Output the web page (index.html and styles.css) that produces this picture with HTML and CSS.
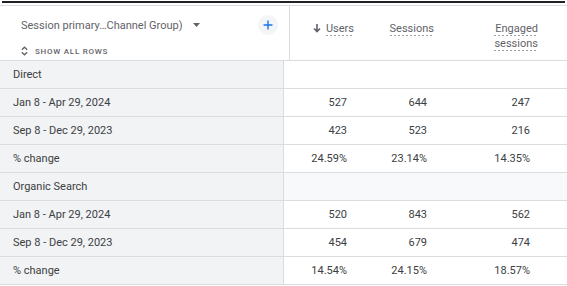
FILE: index.html
```html
<!DOCTYPE html>
<html>
<head>
<meta charset="utf-8">
<link rel="stylesheet" href="styles.css">
</head>
<body>
<div class="topbar"></div>
<div class="table">
  <div class="head">
    <div class="head-dim">
      <div class="dim-row">
        <span class="dim-name">Session primary…Channel Group)</span>
        <svg class="caret" width="7" height="4" viewBox="0 0 7 4"><path d="M0 0h7L3.5 4z" fill="#5f6368"/></svg>
        <span class="add"><svg width="10" height="10" viewBox="0 0 10 10"><path d="M5 0.5v9M0.5 5h9" stroke="#1a73e8" stroke-width="1.4"/></svg></span>
      </div>
      <div class="show-all">
        <svg width="7" height="10" viewBox="0 0 7 10"><path d="M0.8 3.8L3.5 1.2 6.2 3.8M0.8 6.2L3.5 8.8 6.2 6.2" fill="none" stroke="#5f6368" stroke-width="1.3"/></svg>
        <span>SHOW ALL ROWS</span>
      </div>
    </div>
    <div class="hcell c1"><svg class="arrow" width="8" height="9" viewBox="0 0 8 9"><path d="M4 0v7M1 4.5L4 7.5 7 4.5" fill="none" stroke="#5f6368" stroke-width="1.6"/></svg><span class="u">Users</span></div>
    <div class="hcell c2"><span class="u">Sessions</span></div>
    <div class="hcell c3"><span class="u">Engaged<br>sessions</span></div>
  </div>

  <div class="row group"><div class="lab">Direct</div><div class="vals"></div></div>
  <div class="row"><div class="lab">Jan 8 - Apr 29, 2024</div><div class="vals"><span class="v1">527</span><span class="v2">644</span><span class="v3">247</span></div></div>
  <div class="row"><div class="lab">Sep 8 - Dec 29, 2023</div><div class="vals"><span class="v1">423</span><span class="v2">523</span><span class="v3">216</span></div></div>
  <div class="row"><div class="lab">% change</div><div class="vals"><span class="v1">24.59%</span><span class="v2">23.14%</span><span class="v3">14.35%</span></div></div>
  <div class="row group shaded"><div class="lab">Organic Search</div><div class="vals"></div></div>
  <div class="row"><div class="lab">Jan 8 - Apr 29, 2024</div><div class="vals"><span class="v1">520</span><span class="v2">843</span><span class="v3">562</span></div></div>
  <div class="row"><div class="lab">Sep 8 - Dec 29, 2023</div><div class="vals"><span class="v1">454</span><span class="v2">679</span><span class="v3">474</span></div></div>
  <div class="row"><div class="lab">% change</div><div class="vals"><span class="v1">14.54%</span><span class="v2">24.15%</span><span class="v3">18.57%</span></div></div>
</div>
</body>
</html>
```

FILE: styles.css
```css
html, body {
  margin: 0;
  padding: 0;
  background: #fff;
}
body {
  font-family: Roboto, "Liberation Sans", sans-serif;
  font-size: 11px;
  color: #3c4043;
}
.topbar {
  height: 2px;
  margin: 1px 2px 0;
  background: #202124;
}
.table {
  margin-top: 2px;
  border-top: 1px solid #dadce0;
}
.head {
  display: flex;
  height: 54px;
  border-bottom: 1px solid #dadce0;
}
.head-dim {
  width: 289px;
  border-right: 1px solid #dadce0;
  display: flex;
  flex-direction: column;
}
.dim-row {
  display: flex;
  align-items: center;
  height: 36px;
  padding-left: 21px;
  padding-top: 1px;
}
.dim-name {
  color: #5f6368;
}
.caret {
  margin-left: 10px;
}
.add {
  margin-left: auto;
  margin-right: 11px;
  width: 20px;
  height: 20px;
  border-radius: 50%;
  background: #f4f5f7;
  display: flex;
  align-items: center;
  justify-content: center;
}
.show-all {
  display: flex;
  align-items: center;
  padding-left: 21px;
  gap: 7px;
  height: 12px;
  margin-top: 2px;
}
.show-all span {
  font-size: 8px;
  font-weight: 500;
  letter-spacing: 0.75px;
  color: #5f6368;
}
.hcell {
  text-align: right;
  padding-top: 15px;
  color: #5f6368;
  line-height: 15px;
}
.hcell.c1 { width: 64px; }
.hcell.c2 { width: 80px; }
.hcell.c3 { width: 104px; }
.arrow {
  margin-right: 5px;
  vertical-align: -1px;
}
.u {
  display: inline-block;
  background: linear-gradient(to right, #9aa0a6 50%, transparent 50%) 0 14px / 4px 1px repeat-x;
  line-height: 15px;
}
.c3 .u {
  background:
    linear-gradient(to right, #9aa0a6 50%, transparent 50%) 0 14px / 4px 1px repeat-x,
    linear-gradient(to right, #9aa0a6 50%, transparent 50%) 0 29px / 4px 1px repeat-x;
}
.row {
  display: flex;
  height: 27px;
  border-bottom: 1px solid #dadce0;
}
.lab {
  width: 270px;
  padding-left: 13px;
  border-right: 1px solid #dadce0;
  background: #f1f3f4;
  display: flex;
  align-items: center;
  color: #3c4043;
}
.vals {
  flex: 1;
  display: flex;
  align-items: center;
}
.shaded .vals {
  background: #f8f9fa;
}
.vals span {
  text-align: right;
  color: #3c4043;
}
.v1 { width: 63px; }
.v2 { width: 80px; }
.v3 { width: 103px; }
```
